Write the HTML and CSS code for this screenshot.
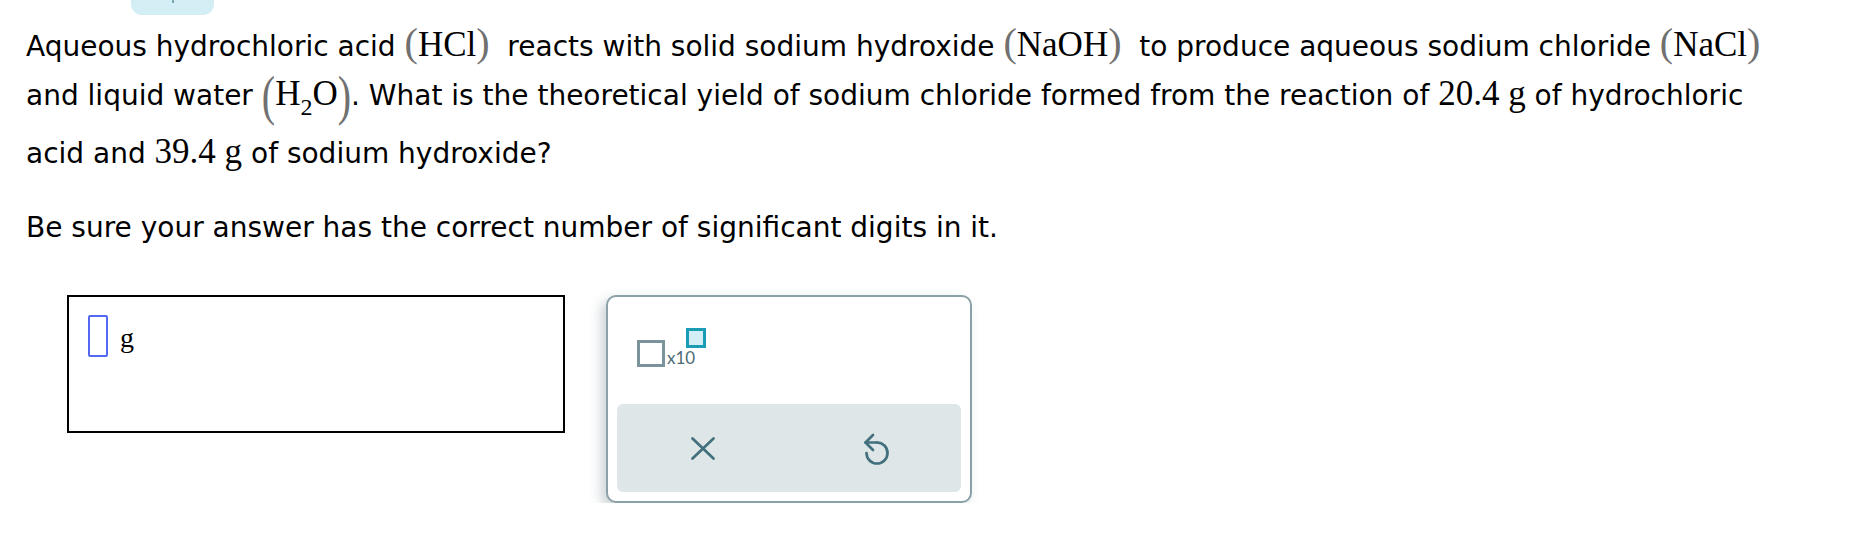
FILE: index.html
```html
<!DOCTYPE html>
<html lang="en">
<head>
<meta charset="utf-8">
<title>Theoretical yield</title>
<link rel="stylesheet" href="styles.css">
</head>
<body>
<div class="page">
  <div class="top-bar"><div class="tab"><span class="tab-mark"></span></div></div>

  <p class="question">Aqueous hydrochloric acid <span class="math"><span class="par">(</span>HCl<span class="par">)</span></span>&nbsp; reacts with solid sodium hydroxide <span class="math"><span class="par">(</span>NaOH<span class="par">)</span></span>&nbsp; to produce aqueous sodium chloride <span class="math"><span class="par">(</span>NaCl<span class="par">)</span></span> and liquid water <span class="math tall"><span class="tpar">(</span>H<sub class="sub">2</sub>O<span class="tpar">)</span></span>. What is the theoretical yield of sodium chloride formed from the reaction of <span class="math">20.4 g</span> of hydrochloric acid and <span class="math">39.4 g</span> of sodium hydroxide?</p>

  <p class="note">Be sure your answer has the correct number of significant digits in it.</p>

  <div class="answer-row">
    <div class="answer-box">
      <span class="cursor"></span>
      <span class="unit">g</span>
    </div>

    <div class="tools">
      <div class="sci">
        <span class="base-box"></span>
        <span class="x10">x10</span>
        <span class="exp-box"></span>
      </div>
      <div class="actions">
        <button class="act" type="button" aria-label="Clear">
          <svg width="24" height="23" viewBox="0 0 24 23" fill="none" stroke="#43707d" stroke-width="2.7" stroke-linecap="round">
            <path d="M1.5 1.5 L22.5 21.5 M22.5 1.5 L1.5 21.5"/>
          </svg>
        </button>
        <button class="act" type="button" aria-label="Undo">
          <svg width="28" height="34" viewBox="0 0 28 34" fill="none" stroke="#43707d" stroke-width="2.7" stroke-linecap="round" stroke-linejoin="round">
            <path d="M16 11.5 A10.5 10.5 0 1 1 5.5 22"/>
            <path d="M16 11.5 H4.5"/>
            <path d="M12 4 L4.5 11.5 L12 19"/>
          </svg>
        </button>
      </div>
    </div>
  </div>
</div>
</body>
</html>
```
FILE: styles.css
```css
* { box-sizing: border-box; }

html, body {
  margin: 0;
  background: #ffffff;
}

body {
  font-family: "DejaVu Sans", Verdana, sans-serif;
  color: #000;
}

.page {
  width: 1864px;
  padding: 0 0 0 26px;
}

.top-bar {
  height: 16px;
}

.tab {
  margin-left: 105px;
  width: 83px;
  height: 15px;
  background: #d3eef4;
  border-radius: 0 0 11px 11px;
  display: flex;
  justify-content: center;
}

.tab-mark {
  width: 2px;
  height: 3px;
  background: #6a9aa6;
  border-radius: 1px;
}

.question,
.note {
  font-size: 28px;
  line-height: 47px;
  margin: 0;
}

.question {
  margin-top: 3px;
  width: 1760px;
}

.note {
  margin-top: 27px;
}

.math {
  font-family: "Liberation Serif", "Times New Roman", serif;
  font-size: 35px;
}

.par {
  font-size: 40px;
  color: #707070;
}

.tall {
  display: inline-block;
  margin-bottom: 11px;
}

.tpar {
  display: inline-block;
  font-size: 40px;
  line-height: 1;
  color: #707070;
  transform: translateY(4px) scaleY(1.39);
}

.sub {
  font-size: 24px;
  line-height: 0;
  vertical-align: -10px;
}

.answer-row {
  display: flex;
  align-items: flex-start;
  gap: 41px;
  margin: 44px 0 0 41px;
}

.answer-box {
  width: 498px;
  height: 138px;
  border: 2px solid #000;
  display: flex;
  align-items: flex-start;
  padding: 18px 0 0 19px;
}

.cursor {
  width: 20px;
  height: 42px;
  border: 2px solid #5468f2;
  border-radius: 2px;
}

.unit {
  font-family: "Liberation Serif", "Times New Roman", serif;
  font-size: 28px;
  line-height: 1;
  margin: 9px 0 0 12px;
}

.tools {
  width: 366px;
  height: 208px;
  border: 2px solid #8ba1a8;
  border-radius: 10px;
  padding: 0 9px 9px 9px;
  display: flex;
  flex-direction: column;
  box-shadow: -5px 5px 12px rgba(60, 85, 95, 0.25);
  background: #fff;
}

.sci {
  height: 107px;
  display: flex;
  align-items: flex-start;
  padding: 31px 0 0 20px;
}

.base-box {
  width: 28px;
  height: 27px;
  border: 3px solid #7b939a;
  margin-top: 12px;
}

.x10 {
  font-family: Lato, "Open Sans", sans-serif;
  font-size: 17px;
  line-height: 17px;
  color: #4d6b75;
  margin: 21px 0 0 2px;
}

.exp-box {
  width: 20px;
  height: 20px;
  border: 3px solid #1a9db4;
  background: #d3eff5;
  margin-left: -9px;
}

.actions {
  flex: 1;
  display: flex;
  background: #dfe6e8;
  border-radius: 6px;
}

.act {
  flex: 1;
  border: 0;
  background: transparent;
  padding: 0;
  display: flex;
  align-items: center;
  justify-content: center;
}
```
